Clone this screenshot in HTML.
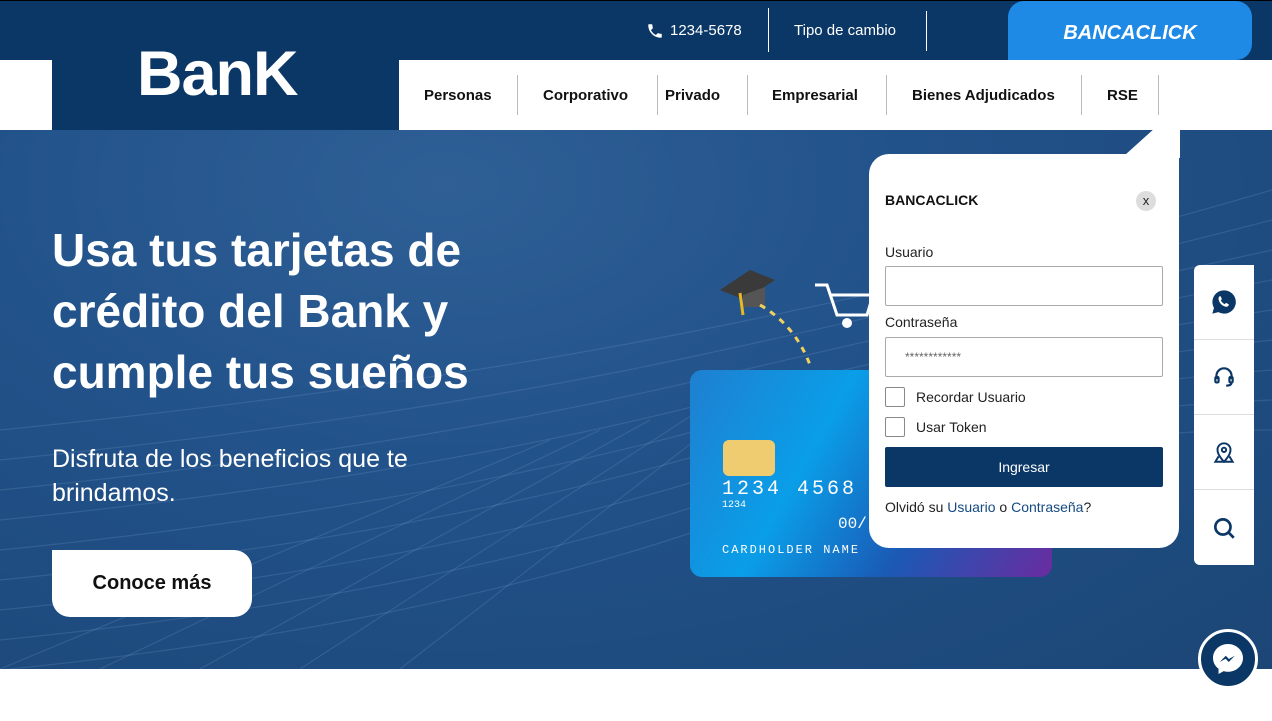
<!DOCTYPE html>
<html><head><meta charset="utf-8"><style>
*{margin:0;padding:0;box-sizing:border-box}
body{width:1272px;height:721px;overflow:hidden;font-family:"Liberation Sans",sans-serif;background:#fff;position:relative}
.abs{position:absolute}
.top{left:0;top:0;width:1272px;height:60px;background:#0b3766;border-top:1px solid #000}
.hero{left:0;top:130px;width:1272px;height:539px;background:radial-gradient(ellipse at 35% 10%,#2e5f95 0%,#22528a 40%,#1b4676 100%);overflow:hidden}
.nav{left:399px;top:60px;width:873px;height:70px;background:#fff}
.nav span{position:absolute;top:27px;font-weight:bold;font-size:15px;color:#111}
.sep{position:absolute;top:15px;width:1px;height:40px;background:#bbb}
.field{position:absolute;left:885px;width:278px;height:40px;border:1px solid #aaa;border-radius:2px;background:#fff}
.cb{position:absolute;left:885px;width:20px;height:20px;border:1px solid #888;border-radius:2px}
.side div{height:75px;border-bottom:1px solid #ddd;display:flex;align-items:center;justify-content:center}
</style></head><body>
<div class="abs top"></div>
<div class="abs" style="left:0;top:60px;width:52px;height:70px;background:#fff"></div>
<div class="abs" style="left:52px;top:60px;width:347px;height:70px;background:#0b3766"></div>
<div class="abs" style="left:137px;top:38px;font-size:63px;font-weight:bold;color:#fff;letter-spacing:-1px">BanK</div>
<svg class="abs" style="left:646px;top:22px" width="18" height="18" viewBox="0 0 24 24"><path fill="#fff" d="M6.6 10.8c1.4 2.8 3.8 5.1 6.6 6.6l2.2-2.2c.3-.3.7-.4 1-.2 1.1.4 2.3.6 3.6.6.6 0 1 .4 1 1V20c0 .6-.4 1-1 1C10.6 21 3 13.4 3 4c0-.6.4-1 1-1h3.5c.6 0 1 .4 1 1 0 1.3.2 2.5.6 3.6.1.3 0 .7-.2 1z"/></svg>
<div class="abs" style="left:670px;top:22px;color:#fff;font-size:15px">1234-5678</div>
<div class="abs" style="left:768px;top:8px;width:1px;height:44px;background:#fff"></div>
<div class="abs" style="left:794px;top:22px;color:#fff;font-size:15px">Tipo de cambio</div>
<div class="abs" style="left:926px;top:11px;width:1px;height:40px;background:#fff"></div>
<div class="abs" style="left:1008px;top:1px;width:244px;height:59px;background:#1e8ae6;border-radius:16px 16px 16px 0"></div>
<div class="abs" style="left:1008px;top:22px;width:244px;text-align:center;color:#fff;font-size:20px;font-weight:bold;font-style:italic">BANCACLICK</div>
<div class="abs nav">
<span style="left:25px">Personas</span><div class="sep" style="left:118px"></div>
<span style="left:144px">Corporativo</span><div class="sep" style="left:258px"></div>
<span style="left:266px">Privado</span><div class="sep" style="left:348px"></div>
<span style="left:373px">Empresarial</span><div class="sep" style="left:487px"></div>
<span style="left:513px">Bienes Adjudicados</span><div class="sep" style="left:682px"></div>
<span style="left:708px">RSE</span><div class="sep" style="left:759px"></div>
</div>
<div class="abs hero">
<svg width="1272" height="539" style="position:absolute;left:0;top:0" stroke="#8fb0d6" stroke-opacity=".18" fill="none">
<g stroke-width="1.2">
<path d="M0 300 Q400 260 700 200 T1272 60"/><path d="M0 330 Q400 290 700 225 T1272 90"/><path d="M0 360 Q400 320 700 250 T1272 120"/><path d="M0 390 Q400 350 700 275 T1272 150"/><path d="M0 420 Q400 380 700 300 T1272 180"/><path d="M0 450 Q400 410 700 325 T1272 210"/><path d="M0 480 Q400 440 700 350 T1272 240"/><path d="M0 510 Q400 470 700 375 T1272 270"/><path d="M0 540 Q400 500 700 400 T1272 300"/>
<path d="M100 539 L600 300"/><path d="M200 539 L650 290"/><path d="M300 539 L700 280"/><path d="M400 539 L760 260"/><path d="M0 539 L550 310"/>
</g></svg>
<div style="position:absolute;left:52px;top:90px;color:#fff;font-size:46px;font-weight:bold;line-height:61px">Usa tus tarjetas de<br>crédito del Bank y<br>cumple tus sueños</div>
<div style="position:absolute;left:52px;top:312px;color:#fff;font-size:25px;line-height:34px">Disfruta de los beneficios que te<br>brindamos.</div>
<div style="position:absolute;left:52px;top:420px;width:200px;height:67px;background:#fff;border-radius:0 18px 18px 18px;text-align:center;line-height:67px;font-size:20px;font-weight:bold;color:#111">Conoce más</div>
<svg style="position:absolute;left:715px;top:135px" width="160" height="110"><polygon points="5,25 35,5 60,15 30,35" fill="#3a3a3a"/><path d="M28 30 v12 h22 v-20" fill="#555"/><path d="M25 28 L28 50" stroke="#e8b820" stroke-width="3"/><path d="M45 40 Q80 60 95 100" stroke="#f0d060" stroke-width="3" stroke-dasharray="6 6" fill="none"/><path d="M100 20 h12 l10 30 h30 l6-20 h-42" stroke="#fff" stroke-width="3" fill="none"/><circle cx="132" cy="58" r="5" fill="#fff"/></svg>
<div style="position:absolute;left:690px;top:240px;width:362px;height:207px;border-radius:12px;background:linear-gradient(120deg,#1f7fd0 0%,#0a9ee8 35%,#1a5ab5 65%,#6a2ca0 100%)"></div>
<div style="position:absolute;left:723px;top:310px;width:52px;height:36px;border-radius:6px;background:#f0cc70"></div>
<div style="position:absolute;left:722px;top:348px;color:#fff;font-size:20px;font-family:'Liberation Mono',monospace;letter-spacing:3px">1234 4568</div>
<div style="position:absolute;left:722px;top:370px;color:#fff;font-size:10px;font-family:'Liberation Mono',monospace">1234</div>
<div style="position:absolute;left:838px;top:385px;color:#fff;font-size:16px;font-family:'Liberation Mono',monospace">00/</div>
<div style="position:absolute;left:722px;top:413px;color:#fff;font-size:12px;letter-spacing:2px;font-family:'Liberation Mono',monospace">CARDHOLDER NAME</div>
</div>
<svg class="abs" style="left:1120px;top:128px" width="60" height="30"><polygon points="5,27 35,0 60,0 60,30 5,30" fill="#fff"/></svg>
<div class="abs" style="left:869px;top:154px;width:310px;height:394px;background:#fff;border-radius:20px 0 20px 20px"></div>
<div class="abs" style="left:885px;top:192px;font-weight:bold;font-size:14px;color:#111">BANCACLICK</div>
<div class="abs" style="left:1136px;top:191px;width:20px;height:20px;border-radius:50%;background:#ddd;text-align:center;font-size:13px;line-height:20px;color:#222">x</div>
<div class="abs" style="left:885px;top:244px;font-size:14px;color:#222">Usuario</div>
<div class="field" style="top:266px"></div>
<div class="abs" style="left:885px;top:314px;font-size:14px;color:#222">Contraseña</div>
<div class="field" style="top:337px;padding:12px 19px;font-size:12px;color:#666">************</div>
<div class="cb" style="top:387px"></div><div class="abs" style="left:916px;top:389px;font-size:14px;color:#222">Recordar Usuario</div>
<div class="cb" style="top:417px"></div><div class="abs" style="left:916px;top:419px;font-size:14px;color:#222">Usar Token</div>
<div class="abs" style="left:885px;top:447px;width:278px;height:40px;background:#0b3766;border-radius:2px;color:#fff;text-align:center;line-height:40px;font-size:14px">Ingresar</div>
<div class="abs" style="left:885px;top:499px;font-size:14px;color:#222">Olvidó su <span style="color:#154a80">Usuario</span> o <span style="color:#154a80">Contraseña</span>?</div>
<div class="abs side" style="left:1194px;top:265px;width:60px;height:300px;background:#fff;border-radius:6px 0 0 6px;overflow:hidden">
<div><svg width="28" height="28" viewBox="0 0 24 24"><path fill="#0b3766" d="M12 2a10 10 0 0 0-8.6 15L2 22l5.2-1.3A10 10 0 1 0 12 2z"/><path fill="#fff" d="M8.5 7c.3 0 .6 0 .8.5l.8 1.8c.1.3 0 .5-.2.7l-.6.7c.8 1.4 1.9 2.5 3.300 3.2l.7-.8c.2-.2.5-.3.7-.2l1.8.9c.3.1.4.4.3.7-.2 1.1-1.2 1.7-2.2 1.6C10.6 15.7 8 13 7.4 10c-.3-1.3.3-2.7 1.1-3z"/></svg></div>
<div><svg width="26" height="26" viewBox="0 0 24 24" fill="none" stroke="#0b3766" stroke-width="2"><path d="M5 14v-3a7 7 0 0 1 14 0v3"/><rect x="4" y="12" width="3" height="5" rx="1"/><rect x="17" y="12" width="3" height="5" rx="1"/><path d="M19 17c0 2-2 3-5 3"/></svg></div>
<div><svg width="26" height="26" viewBox="0 0 24 24" fill="none" stroke="#0b3766" stroke-width="1.8"><path d="M12 21s-6-6-6-11a6 6 0 0 1 12 0c0 5-6 11-6 11z"/><circle cx="12" cy="10" r="2"/><path d="M7 16l-3 5h16l-3-5"/></svg></div>
<div style="border:none"><svg width="26" height="26" viewBox="0 0 24 24" fill="none" stroke="#0b3766" stroke-width="2.5"><circle cx="11" cy="11" r="7"/><path d="M16 16l5 5"/></svg></div>
</div>
<div class="abs" style="left:1198px;top:629px;width:60px;height:60px;border-radius:50%;background:#0b3766;border:3px solid #fff;display:flex;align-items:center;justify-content:center">
<svg width="36" height="36" viewBox="0 0 24 24"><path fill="#fff" d="M12 2C6.5 2 2 6.1 2 11.3c0 2.9 1.4 5.5 3.7 7.2V22l3.4-1.9c.9.3 1.9.4 2.9.4 5.5 0 10-4.1 10-9.2S17.5 2 12 2z"/><path fill="#0b3766" d="M6.5 14l4-4.2 2.1 2.2 3.9-2.2-4 4.2-2.1-2.2z"/></svg></div>
</body></html>
